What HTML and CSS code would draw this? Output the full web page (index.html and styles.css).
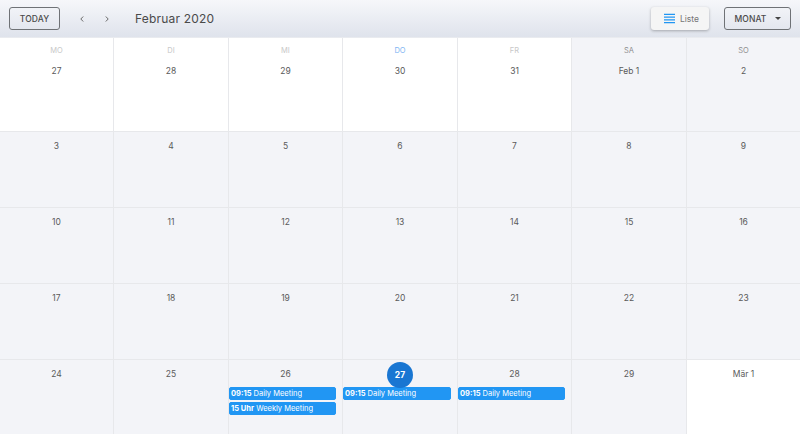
FILE: index.html
```html
<!DOCTYPE html>
<html lang="de">
<head>
<meta charset="utf-8">
<title>Februar 2020</title>
<link rel="stylesheet" href="styles.css">
</head>
<body>
<div class="app">
  <header class="toolbar">
    <button class="btn today">TODAY</button>
    <div class="nav">
      <svg class="chev" viewBox="0 0 6 8"><path d="M4.2 1.5 1.8 4l2.4 2.5"/></svg>
      <svg class="chev" viewBox="0 0 6 8"><path d="M1.8 1.5 4.2 4 1.8 6.5"/></svg>
    </div>
    <div class="title">Februar 2020</div>
    <div class="spacer"></div>
    <button class="liste">
      <svg class="lines" viewBox="0 0 12 11"><path d="M0 1h12M0 4h12M0 7h12M0 10h12"/></svg>
      <span>Liste</span>
    </button>
    <button class="btn monat">MONAT<span class="caret"></span></button>
  </header>
  <main class="month">
    <div class="cell first"><div class="dow">MO</div><div class="num">27</div></div>
    <div class="cell first"><div class="dow">DI</div><div class="num">28</div></div>
    <div class="cell first"><div class="dow">MI</div><div class="num">29</div></div>
    <div class="cell first"><div class="dow today-dow">DO</div><div class="num">30</div></div>
    <div class="cell first"><div class="dow">FR</div><div class="num">31</div></div>
    <div class="cell first cur"><div class="dow strong">SA</div><div class="num">Feb 1</div></div>
    <div class="cell first cur"><div class="dow strong">SO</div><div class="num">2</div></div>

    <div class="cell cur"><div class="num">3</div></div>
    <div class="cell cur"><div class="num">4</div></div>
    <div class="cell cur"><div class="num">5</div></div>
    <div class="cell cur"><div class="num">6</div></div>
    <div class="cell cur"><div class="num">7</div></div>
    <div class="cell cur"><div class="num">8</div></div>
    <div class="cell cur"><div class="num">9</div></div>

    <div class="cell cur"><div class="num">10</div></div>
    <div class="cell cur"><div class="num">11</div></div>
    <div class="cell cur"><div class="num">12</div></div>
    <div class="cell cur"><div class="num">13</div></div>
    <div class="cell cur"><div class="num">14</div></div>
    <div class="cell cur"><div class="num">15</div></div>
    <div class="cell cur"><div class="num">16</div></div>

    <div class="cell cur"><div class="num">17</div></div>
    <div class="cell cur"><div class="num">18</div></div>
    <div class="cell cur"><div class="num">19</div></div>
    <div class="cell cur"><div class="num">20</div></div>
    <div class="cell cur"><div class="num">21</div></div>
    <div class="cell cur"><div class="num">22</div></div>
    <div class="cell cur"><div class="num">23</div></div>

    <div class="cell cur"><div class="num">24</div></div>
    <div class="cell cur"><div class="num">25</div></div>
    <div class="cell cur"><div class="num">26</div>
      <div class="event"><b>09:15</b> Daily Meeting</div>
      <div class="event"><b>15 Uhr</b> Weekly Meeting</div>
    </div>
    <div class="cell cur"><div class="num now"><span>27</span></div>
      <div class="event"><b>09:15</b> Daily Meeting</div>
    </div>
    <div class="cell cur"><div class="num">28</div>
      <div class="event"><b>09:15</b> Daily Meeting</div>
    </div>
    <div class="cell cur"><div class="num">29</div></div>
    <div class="cell"><div class="num">Mär 1</div></div>
  </main>
</div>
</body>
</html>
```
FILE: styles.css
```css
* { box-sizing: border-box; }
html, body { margin: 0; height: 100%; }
body { font-family: Inter, "Noto Sans", sans-serif; color: #424242; background: #fff; overflow: hidden; }
.app { width: 800px; height: 434px; display: flex; flex-direction: column; }

.toolbar {
  height: 37px; flex: none; display: flex; align-items: center; padding: 0 9px 0 9px;
  background: linear-gradient(to bottom, #f6f7fa, #dfe3ec);
}
.btn {
  height: 23px; border: 1px solid #6f7276; border-radius: 3px; background: transparent;
  font: 500 8.5px Inter, sans-serif; color: #4a4a4a; letter-spacing: .1px; padding: 0; cursor: pointer;
  display: flex; align-items: center; justify-content: center;
}
.today { width: 51px; }
.nav { display: flex; margin-left: 19px; gap: 19px; }
.chev { width: 6px; height: 8px; fill: none; stroke: #6a6a6a; stroke-width: 1; }
.title { margin-left: 25px; font-size: 12px; letter-spacing: .2px; color: #4a4a4a; }
.spacer { flex: 1; }
.liste {
  width: 58px; height: 23px; margin-right: 15px; border: 0; border-radius: 3px; background: #f5f5f5;
  box-shadow: 0 1px 3px rgba(0,0,0,.28); display: flex; align-items: center; padding: 0 0 0 13px; gap: 5px;
  font: 400 8.5px Inter, sans-serif; color: #757575;
}
.lines { width: 11px; height: 11px; fill: none; stroke: #2196f3; stroke-width: 1.3; }
.monat { width: 67px; gap: 8px; }
.caret { width: 0; height: 0; border-left: 3px solid transparent; border-right: 3px solid transparent; border-top: 3px solid #444; }

.month {
  flex: 1; display: grid; grid-template-columns: 114px 115px 114px 115px 114px 115px 113px; grid-template-rows: 94px 76px 76px 76px 75px;
  border-top: 1px solid #e9ebef;
}
.cell { border-right: 1px solid #e7e8eb; border-bottom: 1px solid #e7e8eb; background: #fff; text-align: center; font-size: 8.5px; padding-top: 8px; min-width: 0; }
.cell:nth-child(7n) { border-right: 0; }
.cell.cur { background: #f3f4f8; }
.cell.first { padding-top: 7px; }
.dow { font-size: 7.5px; color: #c8c8c8; height: 11px; line-height: 11px; margin-bottom: 9px; }
.dow.strong { color: #8e8e8e; }
.dow.today-dow { color: #7fb6f3; }
.num { height: 13px; line-height: 13px; color: #5a5a5a; margin-bottom: 6px; position: relative; }
.now span {
  position: absolute; left: 50%; top: -6px; width: 26px; height: 26px; margin-left: -13px; border-radius: 50%;
  background: #1976d2; color: #fff; font-weight: 700; line-height: 26px;
}
.event {
  height: 13px; line-height: 11px; margin: 0 6px 2px 0; border-radius: 2px; background: #2196f3; color: #fff; border: 1px solid #2196f3;
  text-align: left; padding-left: 1px; font-size: 7.5px; white-space: nowrap; overflow: hidden;
}
.event b { font-weight: 700; }
```
